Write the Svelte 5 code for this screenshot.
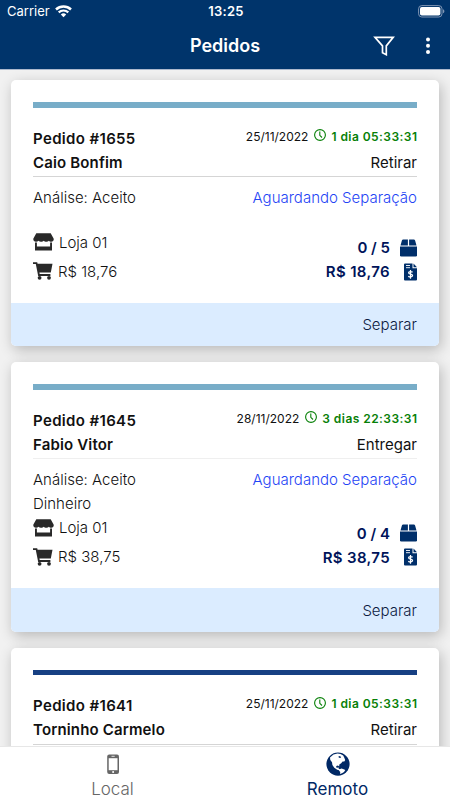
<script lang="ts">
  interface Order {
    id: number;
    customer: string;
    date: string;
    elapsed: string;
    delivery: string;
    color: string;
    payment?: string;
    picked?: string;
    total?: string;
  }

  const orders: Order[] = [
    {
      id: 1655,
      customer: 'Caio Bonfim',
      date: '25/11/2022',
      elapsed: '1 dia 05:33:31',
      delivery: 'Retirar',
      color: '#78adc8',
      picked: '0 / 5',
      total: 'R$ 18,76'
    },
    {
      id: 1645,
      customer: 'Fabio Vitor',
      date: '28/11/2022',
      elapsed: '3 dias 22:33:31',
      delivery: 'Entregar',
      color: '#78adc8',
      payment: 'Dinheiro',
      picked: '0 / 4',
      total: 'R$ 38,75'
    },
    {
      id: 1641,
      customer: 'Torninho Carmelo',
      date: '25/11/2022',
      elapsed: '1 dia 05:33:31',
      delivery: 'Retirar',
      color: '#174083'
    }
  ];

  let tab = $state('remoto');
</script>

<main>
  <header>
    <div class="status">
      <div class="carrier">
        <span>Carrier</span>
        <svg width="17" height="13" viewBox="0 0 17 13" fill="none" stroke="#fff">
          <path d="M1 4.5a11 11 0 0 1 15 0" stroke-width="2.5" />
          <path d="M3.7 7.4a7 7 0 0 1 9.6 0" stroke-width="2.2" />
          <path d="M8.5 12.3 5.8 9.5a4 4 0 0 1 5.4 0z" fill="#fff" stroke="none" />
        </svg>
      </div>
      <strong>13:25</strong>
      <div class="power">
        <svg width="27" height="13" viewBox="0 0 27 13">
          <rect x="0.6" y="0.6" width="23.4" height="11.4" rx="3.2" fill="none" stroke="#8096b4" />
          <rect x="2" y="2" width="20.4" height="8.6" rx="1.8" fill="#fff" />
          <path d="M25 4.3c1.9.7 1.9 3.3 0 4z" fill="#8096b4" />
        </svg>
      </div>
    </div>
    <div class="navbar">
      <h1>Pedidos</h1>
      <div class="actions">
        <button aria-label="Filtrar">
          <svg width="22" height="20" viewBox="0 0 22 20" fill="none" stroke="#fff" stroke-width="1.7">
            <path d="M2 1.3h18.2l-6.9 8.6v8.8l-3.8-1.900V9.900z" />
          </svg>
        </button>
        <button aria-label="Mais opções">
          <svg width="6" height="20" viewBox="0 0 6 20" fill="#fff">
            <circle cx="3" cy="3.5" r="2" />
            <circle cx="3" cy="9.7" r="2" />
            <circle cx="3" cy="16" r="2" />
          </svg>
        </button>
      </div>
    </div>
  </header>

  <section class="orders">
    {#each orders as order (order.id)}
      <article>
        <div class="body">
          <div class="stripe" style="background: {order.color}"></div>
          <div class="row">
            <b>Pedido #{order.id}</b>
            <div class="when">
              <span>{order.date}</span>
              <svg width="12" height="12" viewBox="0 0 12 12" fill="none" stroke="#078007" stroke-width="1.1">
                <circle cx="6" cy="6" r="5.4" />
                <path d="M5.8 2.5v3.8l2.2 2.2" />
              </svg>
              <b>{order.elapsed}</b>
            </div>
          </div>
          <div class="row">
            <b class="customer">{order.customer}</b>
            <span>{order.delivery}</span>
          </div>
          <hr class:light={order.payment} />
          {#if order.total}
            <div class="row thin">
              <span>Análise: Aceito</span>
              <span class="waiting">Aguardando Separação</span>
            </div>
            <div class="payment thin">{order.payment ?? ''}</div>
            <div class="details">
              <div class="info thin">
                <div>
                  <svg width="21" height="18" viewBox="0 0 21 18" fill="#292929">
                    <path d="M3.3.3h14.4l2.9 5.1c.6 1.9-.6 3.4-2.3 3.4-1.1 0-1.8-.4-2.4-1-.6.7-1.4 1-2.5 1-1.2 0-2-.4-2.7-1-.7.7-1.5 1-2.7 1-1.1 0-1.9-.4-2.5-1-.6.7-1.4 1-2.5 1C1.1 8.8-.1 7.3.4 5.4z" />
                    <path d="M2 9.5h1.900v4h13.200v-4H19v8H2z" />
                  </svg>
                  <span>Loja 01</span>
                </div>
                <div>
                  <svg width="20" height="18" viewBox="0 0 20 18" fill="#292929">
                    <path d="M0 .3h4.200l.4 1.500h14.900l-1.700 8.600H6.400l.3 1.700h10.700v1.800H5.200L2.800 2.100H0z" />
                    <circle cx="6.6" cy="15.8" r="1.9" />
                    <circle cx="16" cy="15.8" r="1.9" />
                  </svg>
                  <span>{order.total}</span>
                </div>
              </div>
              <div class="totals">
                <div>
                  <b class="picked">{order.picked}</b>
                  <svg width="17" height="18" viewBox="0 0 17 18" fill="#002f6a">
                    <path d="M3.2.4h4.700v6H.5l1.400-5Q2.200.4 3.200.4zM9.100.4h4.700q1 0 1.300 1l1.400 5H9.100z" />
                    <path d="M0 7.5h17v8.700q0 1.300-1.300 1.300H1.300Q0 17.500 0 16.200z" />
                  </svg>
                </div>
                <div>
                  <b>{order.total}</b>
                  <svg width="13" height="18" viewBox="0 0 13 18">
                    <path d="M1 .5h7.500v4.700H13v11.300q0 1-1 1H1q-1 0-1-1v-15q0-1 1-1zM9.500.5 13 4.200H9.500z" fill="#002f6a" />
                    <path d="M2 2.500h4M2 4.700h4" stroke="#fff" stroke-width=".9" />
                    <path d="M6.500 7v8.700M8.600 9.200c-1-.9-4-1-4 .6 0 1.700 4 1 4 2.800 0 1.500-3 1.700-4.300.6" fill="none" stroke="#fff" stroke-width="1.2" />
                  </svg>
                </div>
              </div>
            </div>
          {/if}
        </div>
        {#if order.total}
          <button class="pick thin">Separar</button>
        {/if}
      </article>
    {/each}
  </section>

  <nav>
    <button class:active={tab === 'local'} onclick={() => (tab = 'local')}>
      <svg width="24" height="24" viewBox="0 0 24 24">
        <rect x="6.2" y="2.5" width="11.8" height="19.4" rx="2" fill="currentColor" />
        <path d="M7.7 6.2h8.800v12H7.700z" fill="#fff" />
        <path d="M10.5 4.3h3.200" stroke="#fff" stroke-width=".8" />
        <circle cx="12.1" cy="20" r="1" fill="#fff" />
      </svg>
      <span>Local</span>
    </button>
    <button class:active={tab === 'remoto'} onclick={() => (tab = 'remoto')}>
      <svg width="24" height="24" viewBox="0 0 24 24">
        <circle cx="12" cy="12.1" r="11.6" fill="currentColor" />
        <g fill="#fff">
          <path d="M4 5.500 7.500 2.500l4-1 3 .4 2.700 1.700 1 2 1 2.400-.9 1.600-1.700-.2-1.400 1.900-1.900 1.200-.1 2-1.300-1-1.600.5-.1 1.400 1.400.4.8-.5.4 1.400 1.600.7-.5 1-2.700-.7-2.900-2-1.900-2.800-.4-2.700L4.300 8z" />
          <path d="m13.500 17.200 2.100-.7 2 .8 1.700.8-1.300 1.900-2 1.300-2 .7.300-2-1.200-1.300z" />
        </g>
        <path d="m12.800 3.900 1.900.5.400 1.200-1.300.4-1.300-.8z" fill="currentColor" />
      </svg>
      <span>Remoto</span>
    </button>
  </nav>
</main>

<style>
  :global(body) {
    margin: 0;
    overflow: hidden;
  }

  main {
    height: 100vh;
    display: flex;
    flex-direction: column;
    background: #f1f1f1;
    color: #111;
    font-family: Inter, 'Liberation Sans', sans-serif;
    font-size: 15px;
  }

  button {
    border: none;
    background: none;
    padding: 0;
    font: inherit;
    color: inherit;
    display: flex;
    cursor: pointer;
  }

  svg {
    display: block;
    flex-shrink: 0;
  }

  b {
    font-weight: 600;
    letter-spacing: 0.35px;
  }

  header {
    height: 69px;
    flex-shrink: 0;
    background: #00346b;
    color: #fff;
    border-bottom: 1px solid #adb9cd;
  }

  .status {
    height: 22px;
    display: grid;
    grid-template-columns: 1fr auto 1fr;
    align-items: center;
    padding: 0 5px 0 7px;
    font-size: 13px;
  }

  .status strong {
    font-weight: 600;
    letter-spacing: 0.3px;
  }

  .carrier {
    display: flex;
    align-items: center;
    gap: 5px;
  }

  .power {
    justify-self: end;
  }

  .navbar {
    height: 47px;
    display: grid;
    grid-template-columns: 1fr auto 1fr;
    align-items: center;
  }

  h1 {
    margin: 0;
    grid-column: 2;
    font-size: 18px;
    font-weight: 600;
  }

  .actions {
    display: flex;
    justify-content: flex-end;
    align-items: center;
    gap: 30px;
    padding-right: 19px;
  }

  .orders {
    flex: 1;
    min-height: 0;
    overflow: hidden;
    padding: 10.4px 11px 0;
    display: flex;
    flex-direction: column;
    gap: 16px;
  }

  article {
    flex-shrink: 0;
    min-height: 266px;
    background: #fff;
    border-radius: 5px;
    box-shadow: 2px 4px 14px rgba(0, 0, 0, 0.24);
  }

  .body {
    padding: 22px 22px 17px;
  }

  .stripe {
    height: 5.5px;
    margin-bottom: 18.5px;
  }

  .row {
    height: 24px;
    display: flex;
    justify-content: space-between;
    align-items: center;
  }

  .thin {
    font-weight: 300;
  }

  .customer {
    letter-spacing: 0.15px;
  }

  .when {
    display: flex;
    align-items: center;
    font-size: 12px;
    margin-top: -4px;
  }

  .when svg {
    margin: -2px 5px 0 6px;
  }

  .when b {
    color: #078007;
    letter-spacing: 0.45px;
    margin-right: -0.45px;
  }

  hr {
    margin: 2px 0 8.5px;
    border: none;
    height: 1px;
    background: #d5d5d5;
  }

  hr.light {
    background: #efefef;
  }

  .waiting {
    color: #1f45f5;
  }

  .payment {
    height: 21.5px;
    line-height: 24px;
  }

  .payment:empty {
    height: 18px;
  }

  .details {
    display: flex;
    justify-content: space-between;
    align-items: flex-end;
  }

  .info div,
  .totals div {
    display: flex;
    align-items: center;
  }

  .info div {
    height: 29px;
    gap: 5px;
  }

  .totals {
    color: #00145a;
    padding-bottom: 2px;
  }

  .totals div {
    height: 24px;
    justify-content: flex-end;
  }

  .totals svg {
    margin-left: 10px;
  }

  .totals div:last-child svg {
    margin-left: 14px;
  }

  .picked {
    letter-spacing: 0;
  }

  .pick {
    width: 100%;
    height: 43.5px;
    padding-right: 22px;
    justify-content: flex-end;
    align-items: center;
    background: #dbecff;
    border-radius: 0 0 5px 5px;
    color: #0c1a3f;
  }

  nav {
    height: 53px;
    flex-shrink: 0;
    display: flex;
    background: #fff;
    border-top: 1px solid #e7e7e7;
    position: relative;
  }

  nav button {
    flex: 1;
    flex-direction: column;
    align-items: center;
    gap: 1px;
    padding-top: 5px;
    color: #666;
    font-size: 17px;
    font-weight: 300;
    line-height: 25px;
  }

  nav button.active {
    color: #002865;
    font-weight: 400;
  }
</style>
